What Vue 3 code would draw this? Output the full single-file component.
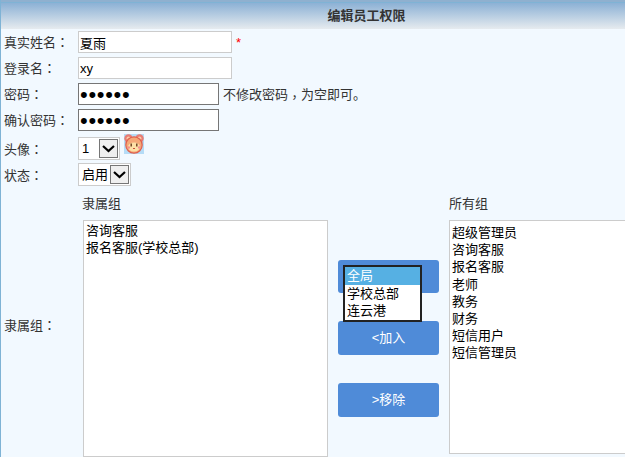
<script setup>
const rows = [
  { label: '真实姓名', value: '夏雨', type: 'text', star: true },
  { label: '登录名', value: 'xy', type: 'text' },
  { label: '密码', value: '123456', type: 'password', hint: true },
  { label: '确认密码', value: '123456', type: 'password' },
]
const mine = ['咨询客服', '报名客服(学校总部)']
const all = ['超级管理员', '咨询客服', '报名客服', '老师', '教务', '财务', '短信用户', '短信管理员']
const campus = ['全局', '学校总部', '连云港']
</script>

<template>
  <div class="page">
    <div class="head">编辑员工权限</div>
    <div class="form">
      <div v-for="r in rows" :key="r.label" class="row">
        <span class="label">{{ r.label }}<span class="punct">：</span></span>
        <input :type="r.type" :value="r.value" readonly :class="r.type === 'password' ? 'pw' : 'txt'" />
        <span v-if="r.star" class="star">*</span>
        <span v-if="r.hint" class="hint">不修改密码<span class="punct low">，</span>为空即可。</span>
      </div>
      <div class="row row-avatar">
        <span class="label">头像<span class="punct">：</span></span>
        <div class="sel w-avatar">
          <span class="sel-text">1</span>
          <span class="arrow"><svg width="13" height="8" viewBox="0 0 13 8"><path d="M1 1l5.5 5L12 1" fill="none" stroke="#000" stroke-width="2.2"/></svg></span>
        </div>
        <svg class="bear" width="20" height="20" viewBox="0 0 20 20">
          <rect width="20" height="20" fill="#b5dcf7"/>
          <circle cx="4.5" cy="4.5" r="4.2" fill="#e87c74"/>
          <circle cx="15.5" cy="4.5" r="4.2" fill="#e87c74"/>
          <circle cx="4.5" cy="4.5" r="2" fill="#f9c9a8"/>
          <circle cx="15.5" cy="4.5" r="2" fill="#f9c9a8"/>
          <circle cx="10" cy="11" r="8.2" fill="#f5a878" stroke="#e0604c" stroke-width="1.2"/>
          <ellipse cx="10" cy="13" rx="6" ry="4.6" fill="#fde0a6"/>
          <rect x="6.5" y="9.5" width="1.4" height="3" fill="#6b3a1e"/>
          <rect x="12.1" y="9.5" width="1.4" height="3" fill="#6b3a1e"/>
          <circle cx="4.8" cy="13.5" r="1.3" fill="#f58f8f"/>
          <circle cx="15.2" cy="13.5" r="1.3" fill="#f58f8f"/>
          <path d="M9 14.5h2" stroke="#c9503a" stroke-width="1"/>
        </svg>
      </div>
      <div class="row row-status">
        <span class="label">状态<span class="punct">：</span></span>
        <div class="sel w-status">
          <span class="sel-text">启用</span>
          <span class="arrow"><svg width="13" height="8" viewBox="0 0 13 8"><path d="M1 1l5.5 5L12 1" fill="none" stroke="#000" stroke-width="2.2"/></svg></span>
        </div>
      </div>
      <div class="groups">
        <span class="label group-label">隶属组<span class="punct">：</span></span>
        <div class="col col-mine">
          <div class="col-title">隶属组</div>
          <div class="list list-mine">
            <div v-for="m in mine" :key="m">{{ m }}</div>
          </div>
        </div>
        <div class="actions">
          <div class="btn btn-first">
            <div class="popup">
              <div v-for="(c, i) in campus" :key="c" class="opt" :class="{ on: i === 0 }">{{ c }}</div>
            </div>
          </div>
          <div class="btn">&lt;加入</div>
          <div class="btn">&gt;移除</div>
        </div>
        <div class="col col-all">
          <div class="col-title">所有组</div>
          <div class="list list-all">
            <div v-for="a in all" :key="a">{{ a }}</div>
          </div>
        </div>
      </div>
    </div>
  </div>
</template>

<style>
html, body { margin: 0; padding: 0; overflow: hidden; }
</style>

<style scoped>
.page {
  width: 625px;
  height: 457px;
  overflow: hidden;
  box-sizing: border-box;
  background: #f2f9ff;
  border-left: 1px solid #7fb3d5;
  font: 13px/17px "Liberation Sans", "Noto Sans CJK SC", sans-serif;
  color: #333;
}
.head {
  box-sizing: border-box;
  height: 29px;
  padding-left: 107px;
  border-top: 2px solid #8fb0cf;
  line-height: 27px;
  text-align: center;
  font-weight: bold;
  background: linear-gradient(#7fb3d5 1px, #8cb1d5 1px, #e6ebef);
  color: #333;
}
.row {
  display: flex;
  align-items: center;
  height: 26px;
}
.row-avatar { height: 25px; margin-top: 3px; }
.row-status { height: 27px; }
.label { width: 77px; padding-left: 3px; box-sizing: border-box; flex: none; }
.punct { font-family: "Noto Sans CJK TC", sans-serif; }
.low { position: relative; top: 3px; }
input {
  box-sizing: border-box;
  height: 22px;
  padding: 0 1px;
  margin: 0;
  background: #fff;
  font: 13px "Liberation Sans", "Noto Sans CJK SC", sans-serif;
  color: #000;
  outline: none;
}
.txt { width: 154px; border: 1px solid #ccc; }
.pw { width: 141px; border: 1px solid #767676; padding-top: 2px; font-size: 22px; letter-spacing: 0.7px; }
.star { color: #f00; margin-left: 4px; }
.hint { margin-left: 4px; }
.sel {
  box-sizing: border-box;
  display: flex;
  align-items: center;
  background: #fff;
  border: 1px solid #ccc;
  color: #000;
  height: 23px;
}
.w-avatar { width: 42px; padding-left: 3px; justify-content: space-between; }
.w-status { width: 53px; padding-left: 3px; justify-content: space-between; }
.arrow {
  box-sizing: border-box;
  width: 19px;
  height: 19px;
  margin-right: 1px;
  border: 1px solid #767676;
  background: #efefef;
  display: flex;
  align-items: center;
  justify-content: center;
}
.bear { align-self: flex-start; margin-left: 4px; margin-top: -2px; }
.groups { display: flex; padding-top: 6px; }
.group-label { width: 82px; align-self: center; margin-bottom: 2px; }
.col-title { height: 26px; padding-top: 1px; box-sizing: border-box; margin-left: -1px; }
.col-mine { width: 255px; flex: none; }
.col-all { flex: none; width: 176px; }
.col-all .col-title { margin-left: 0; }
.list {
  box-sizing: border-box;
  background: #fff;
  border: 1px solid #ccc;
  color: #000;
  padding: 1px 2px;
  line-height: 17.2px;
}
.list-mine { width: 245px; height: 237px; }
.list-all { width: 190px; height: 234px; padding-top: 3px; }
.actions {
  width: 111px;
  flex: none;
  padding-top: 66px;
  display: flex;
  flex-direction: column;
}
.btn {
  position: relative;
  width: 101px;
  height: 34px;
  margin-bottom: 28px;
  border-radius: 3px;
  background: #4f8bd8;
  color: #fff;
  text-align: center;
  line-height: 34px;
}
.btn-first { height: 33px; }
.popup {
  position: absolute;
  left: 5px;
  top: 5px;
  width: 79px;
  height: 57px;
  box-sizing: border-box;
  border: 2px solid #222;
  background: #fff;
  color: #000;
  text-align: left;
  z-index: 2;
}
.opt { height: 17.66px; line-height: 17.66px; padding-left: 2px; }
.opt.on { background: #56b0e3; color: #fff; }
</style>
